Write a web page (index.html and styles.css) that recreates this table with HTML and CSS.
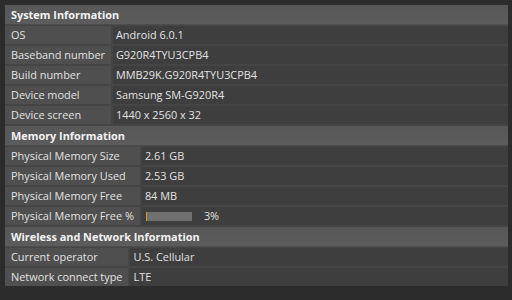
FILE: index.html
```html
<!DOCTYPE html>
<html>
<head>
<meta charset="utf-8">
<link rel="stylesheet" href="styles.css">
</head>
<body>
<div class="panel">
  <section class="sec">
    <div class="head">System Information</div>
    <div class="k">OS</div><div class="v">Android 6.0.1</div>
    <div class="k">Baseband number</div><div class="v">G920R4TYU3CPB4</div>
    <div class="k">Build number</div><div class="v">MMB29K.G920R4TYU3CPB4</div>
    <div class="k">Device model</div><div class="v">Samsung SM-G920R4</div>
    <div class="k">Device screen</div><div class="v">1440 x 2560 x 32</div>
  </section>
  <section class="sec">
    <div class="head">Memory Information</div>
    <div class="k">Physical Memory Size</div><div class="v">2.61 GB</div>
    <div class="k">Physical Memory Used</div><div class="v">2.53 GB</div>
    <div class="k">Physical Memory Free</div><div class="v">84 MB</div>
    <div class="k">Physical Memory Free %</div><div class="v"><span class="bar"><span class="fill" style="width:3%"></span></span><span class="pct">3%</span></div>
  </section>
  <section class="sec">
    <div class="head">Wireless and Network Information</div>
    <div class="k">Current operator</div><div class="v">U.S. Cellular</div>
    <div class="k">Network connect type</div><div class="v">LTE</div>
  </section>
</div>
</body>
</html>
```
FILE: styles.css
```css
html, body {
  margin: 0;
  padding: 0;
  background: #2c2c2c;
}
body {
  padding: 5px 4px 0 5px;
  font-family: "Open Sans", "Noto Sans", sans-serif;
  font-size: 10.9px;
  color: #e2e2e2;
}
.panel {
  display: flex;
  flex-direction: column;
  gap: 2px;
  background: #454545;
}
.sec {
  display: grid;
  grid-template-columns: max-content 1fr;
  gap: 2px;
}
.head {
  grid-column: 1 / -1;
  box-sizing: border-box;
  height: 20px;
  line-height: 19px;
  padding-left: 6px;
  margin-bottom: -1px;
  font-weight: bold;
  color: #f2f2f2;
  background: linear-gradient(#575757, #5c5c5c);
  border-bottom: 1px solid #4c4c4c;
}
.k {
  height: 18px;
  line-height: 18px;
  padding: 0 6px;
  background: #4f4f4f;
  white-space: nowrap;
}
.v {
  height: 18px;
  line-height: 18px;
  padding: 0 4px 0 3px;
  background: #3e3e3e;
  display: flex;
  align-items: center;
  white-space: nowrap;
}
.bar {
  display: block;
  width: 46px;
  height: 9px;
  margin-left: 1px;
  background: #707070;
}
.fill {
  display: block;
  height: 100%;
  max-width: 1px;
  background: #e8901c;
}
.pct {
  margin-left: 12px;
}
```
